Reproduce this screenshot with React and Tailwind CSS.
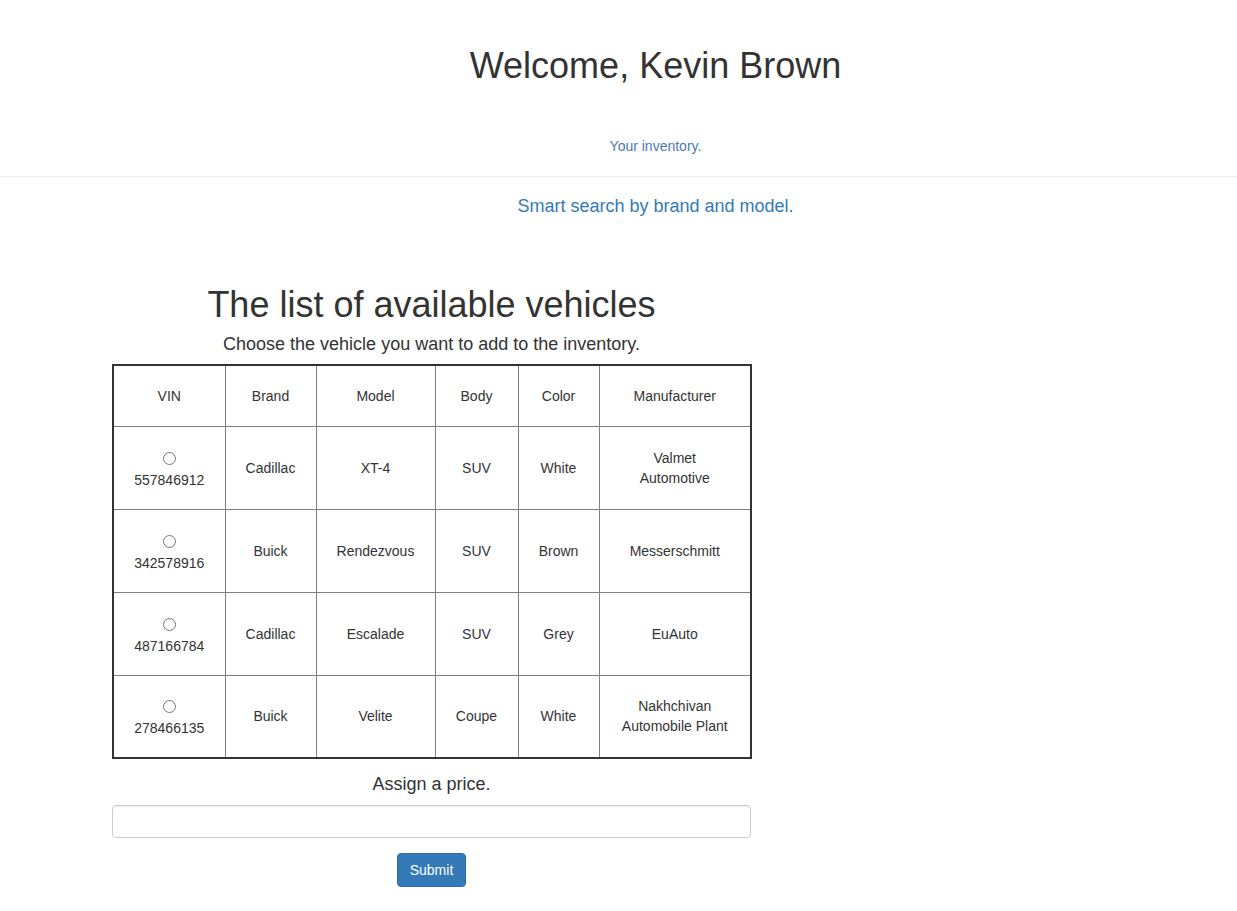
import React from "react";

const rows = [
  ["557846912", "Cadillac", "XT-4", "SUV", "White", "Valmet Automotive"],
  ["342578916", "Buick", "Rendezvous", "SUV", "Brown", "Messerschmitt"],
  ["487166784", "Cadillac", "Escalade", "SUV", "Grey", "EuAuto"],
  ["278466135", "Buick", "Velite", "Coupe", "White", "Nakhchivan Automobile Plant"],
];

const widths = ["w-[112px]", "w-[91px]", "w-[119px]", "w-[83px]", "w-[81px]", "w-[152px]"];

export default function App() {
  return (
    <div
      className="min-h-[911px] bg-white text-[#333] text-[14px] leading-[20px]"
      style={{ fontFamily: '"Liberation Sans", Arial, sans-serif' }}
    >
      <div className="pt-[46px] pl-[74px] text-center">
        <h1 className="text-[36px] leading-[40px] font-normal">Welcome, Kevin Brown</h1>
        <div className="mt-[50px] text-[14px] leading-[20px] text-[#4a7ab5]">Your inventory.</div>
      </div>
      <div className="mt-[20px] h-px bg-[#eeeeee]" />
      <div className="mt-[16px] pl-[74px] text-center text-[18px] leading-[26px] text-[#337ab7]">
        Smart search by brand and model.
      </div>

      <div className="ml-[112px] w-[639px] mt-[66px]">
        <h2 className="text-center text-[36px] leading-[40px] font-normal">The list of available vehicles</h2>
        <p className="mt-[7px] text-center text-[18px] leading-[24px]">
          Choose the vehicle you want to add to the inventory.
        </p>
        <table className="mt-[8px] w-[638px] table-fixed border-collapse border-2 border-[#333]">
          <colgroup>
            {widths.map((w, i) => (
              <col key={i} className={w} />
            ))}
          </colgroup>
          <thead>
            <tr className="h-[61px]">
              {["VIN", "Brand", "Model", "Body", "Color", "Manufacturer"].map((h) => (
                <th key={h} className="border border-[#808080] font-normal text-center align-middle">
                  {h}
                </th>
              ))}
            </tr>
          </thead>
          <tbody>
            {rows.map((r) => (
              <tr key={r[0]} className="h-[83px]">
                <td className="border border-[#808080] text-center align-middle">
                  <div className="flex flex-col items-center gap-[5px] pt-[6px]">
                    <input
                      type="radio"
                      name="vin"
                      className="appearance-none w-[13px] h-[13px] m-0 rounded-full border border-[#767676] bg-white"
                    />
                    <span>{r[0]}</span>
                  </div>
                </td>
                {r.slice(1).map((c, i) => (
                  <td key={i} className="border border-[#808080] text-center align-middle px-[20px]">
                    {c}
                  </td>
                ))}
              </tr>
            ))}
          </tbody>
        </table>
        <p className="mt-[13px] text-center text-[18px] leading-[24px]">Assign a price.</p>
        <input
          type="text"
          className="mt-[9px] block w-[639px] h-[33px] rounded-[4px] border border-[#ccc] px-3 shadow-[inset_0_1px_1px_rgba(0,0,0,0.075)] outline-none"
        />
        <div className="mt-[15px] flex justify-center">
          <button className="h-[34px] px-[12px] rounded-[4px] bg-[#337ab7] border border-[#2e6da4] text-white text-[14px]">
            Submit
          </button>
        </div>
      </div>
    </div>
  );
}
